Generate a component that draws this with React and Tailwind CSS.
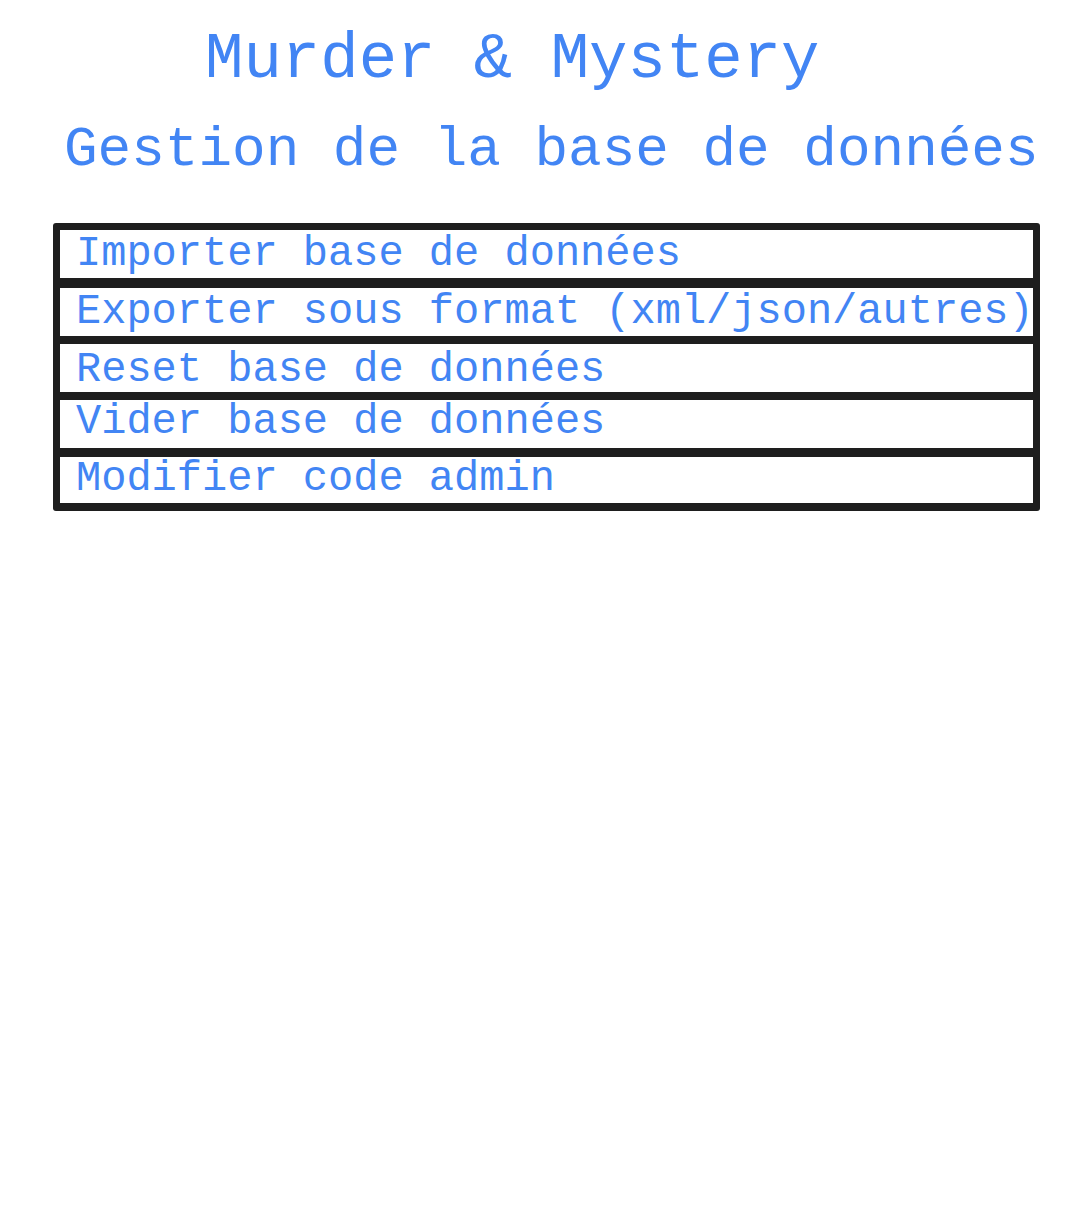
import React from "react";

const rows = [
    { label: "Importer base de données", cls: "h-[48px] leading-[48px]", sep: "" },
    { label: "Exporter sous format (xml/json/autres)", cls: "h-[48px] leading-[48px] pl-[2px]", sep: "border-t-[10px]" },
    { label: "Reset base de données", cls: "h-[48px] leading-[52px] pl-[2px]", sep: "border-t-[8px]" },
    { label: "Vider base de données", cls: "h-[48px] leading-[44px] pl-[1px]", sep: "border-t-[8px]" },
    { label: "Modifier code admin", cls: "h-[46px] leading-[44px] pl-[2px]", sep: "border-t-[9px]" },
];

const App = () => {
    return (
        <div className="min-h-screen bg-white font-['Liberation_Mono',monospace] text-[#4285f4]">
            <div className="pt-[28px]">
                <h1 className="pl-[205px] text-[64px] leading-[64px] font-normal whitespace-nowrap">
                    Murder &amp; Mystery
                </h1>
                <h2 className="mt-[30px] pl-[64px] text-[56px] leading-[56px] font-normal whitespace-nowrap">
                    Gestion de la base de données
                </h2>
            </div>

            <div className="mt-[45px] ml-[53px] w-[987px] border-x-[7px] border-t-[7px] border-b-[8px] border-[#1e1e1e] rounded-[3px]">
                {rows.map((row) => (
                    <div key={row.label} className={`${row.sep} border-[#1e1e1e]`}>
                        <div className={`${row.cls} pl-[16px] text-[42px] whitespace-nowrap overflow-visible`}>
                            {row.label}
                        </div>
                    </div>
                ))}
            </div>
        </div>
    );
};

export default App;
